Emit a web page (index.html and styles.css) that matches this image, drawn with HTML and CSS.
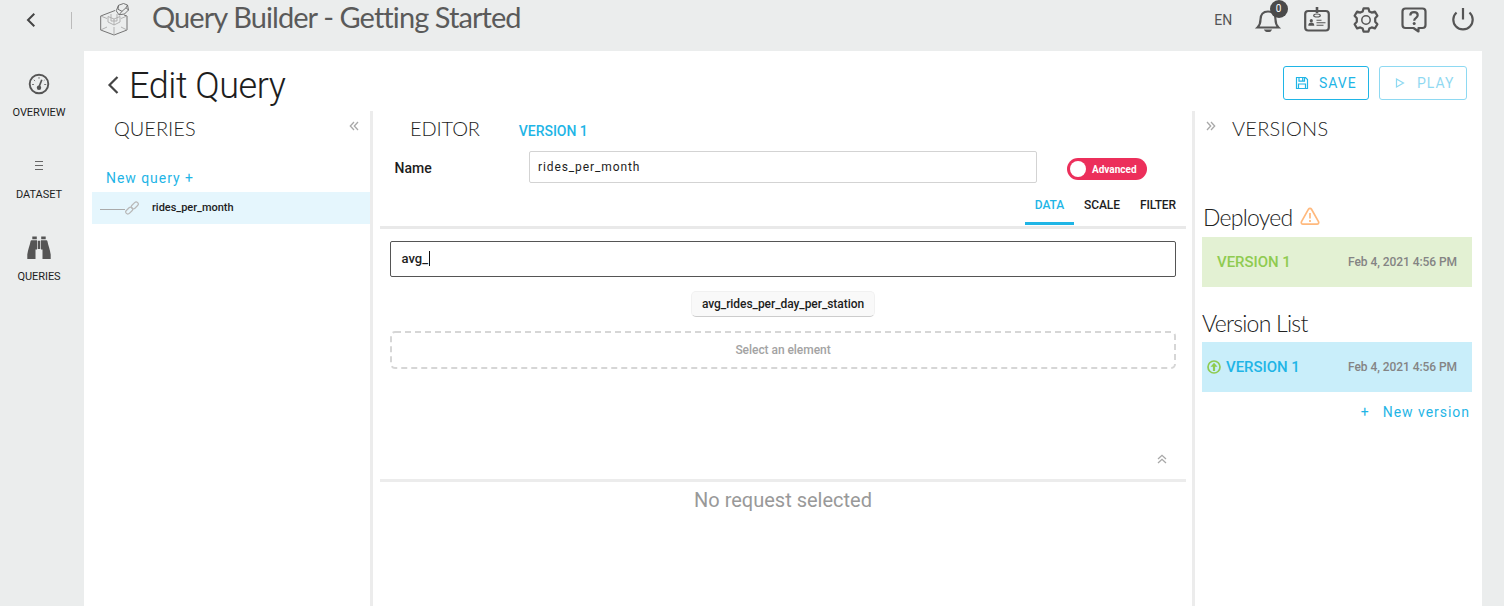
FILE: index.html
```html
<!DOCTYPE html>
<html lang="en">
<head>
<meta charset="utf-8">
<title>Query Builder - Getting Started</title>
<link rel="stylesheet" href="styles.css">
</head>
<body>
<header class="topbar">
  <svg class="top-back" width="12" height="16" viewBox="0 0 12 16"><path d="M9.300 1.800 3 8l6.300 6.200"/></svg>
  <span class="top-sep"></span>
  <svg class="logo" width="32" height="34" viewBox="0 0 32 34">
    <g fill="none" stroke="#666" stroke-width=".9" stroke-linejoin="round">
      <path d="M17 8.500 2.700 14v14L16 33l13-5V14l-3-1"/>
      <path stroke="#aaa" d="M2.700 14 9 16.500M29 14l-6 2.500M16 25v8M2.700 28 9 25M29 28l-6-3M10 14.500v5.500l6 3 6-3v-5.500M10 14.500l6 2.500 6-2.500M16 17v6M13 12v7h6v-7"/>
      <path d="m20.500 3.300 5-1.800 4 1.500 1 5-4 4-5.500.8-2.800-4zM20.500 3.300l-.5 4 4 2 4-3.500 1.500-2.800M24 9.300l-3 3.500M28 5.800l2.500 2.200"/>
    </g>
  </svg>
  <h1 class="app-title">Query Builder - Getting Started</h1>
  <nav class="tools">
    <span class="lang">EN</span>
    <span class="bell">
      <svg class="tool" width="28" height="28" viewBox="0 0 28 28"><path d="M3.500 21.500h21c-2-2-3-3.500-3-8 0-5-2.500-8-7.500-8s-7.500 3-7.500 8c0 4.500-1 6-3 8z"/><path class="solid" d="M9.800 23.500h8.400c-.8 1.700-2.200 2.600-4.200 2.600s-3.400-.9-4.200-2.600z"/></svg>
      <span class="badge">0</span>
    </span>
    <svg class="tool" width="28" height="28" viewBox="0 0 28 28"><rect x="2.200" y="5" width="23.600" height="19.500" rx="3"/><path d="M14 1v6" stroke-width="2.600"/><ellipse cx="14" cy="9.500" rx="3.300" ry="1.500" stroke-width="1.200"/><circle class="solid" cx="8.300" cy="14.700" r="1.600"/><path class="solid" d="M5.300 19.800c0-2.200 1.200-3.200 3-3.200s3 1 3 3.200z"/><path d="M13.500 14.300h5M13.500 16.800h9M13.500 19.300h7" stroke-width="1.100"/></svg>
    <svg class="tool" width="28" height="28" viewBox="0 0 28 28"><path stroke-linejoin="round" d="M11.600 2.300h4.800l.9 3.100 2.400 1.200 3.200-1 2.500 4.200-2.200 2.400v3.600l2.200 2.400-2.500 4.200-3.200-1-2.400 1.200-.9 3.100h-4.800l-.9-3.100-2.400-1.200-3.200 1-2.500-4.200 2.200-2.400v-3.600l-2.200-2.400 2.500-4.200 3.200 1 2.400-1.200z"/><circle cx="14" cy="14" r="4.200" stroke-width="1.500"/></svg>
    <svg class="tool" width="28" height="28" viewBox="0 0 28 28"><path stroke-linejoin="round" d="M5.500 2.500h17c2 0 3 1 3 3V19c0 2-1 3-3 3h-4v3.500L13.500 22h-8c-2 0-3-1-3-3V5.500c0-2 1-3 3-3z"/><path d="M10.300 9.500c0-2.200 1.500-3.300 3.700-3.300s3.700 1.200 3.700 3.100c0 2.500-3.500 2.500-3.500 5.400"/><circle class="solid" cx="14.200" cy="17.600" r="1.500"/></svg>
    <svg class="tool" width="28" height="28" viewBox="0 0 28 28"><path d="M14 2v11.500M7.500 6.500a9.700 9.700 0 1 0 13 0"/></svg>
  </nav>
</header>
<div class="shell">
  <aside class="sidebar">
    <a class="side-item">
      <svg width="24" height="24" viewBox="0 0 24 24"><circle cx="12" cy="12" r="9.300" fill="none" stroke="#555" stroke-width="1.900"/><path d="M14.800 7.800 12 15" stroke="#555" stroke-width="1.700"/><circle cx="12" cy="15.800" r="2.200" fill="#555"/><path d="M5 12.500h2M17.200 12.500h2M6.800 7.800l1.300 1.200M12 5v1.800M17.600 8l-.8.700" stroke="#777" stroke-width="1"/></svg>
      <span>OVERVIEW</span>
    </a>
    <a class="side-item">
      <svg width="24" height="24" viewBox="0 0 24 24"><path d="M8 7.500h8M8 11.500h8M8 15.500h8" stroke="#666" stroke-width="1"/></svg>
      <span>DATASET</span>
    </a>
    <a class="side-item">
      <svg width="24" height="24" viewBox="0 0 24 24" fill="#555"><path d="M5.300.5h4.500v2.800H5.300zM14.200.5h4.500v2.800h-4.500zM5 4.300h5v9.200H8.500V23H.3v-4.500C1 13 3 9 3.500 5.500 3.800 4.500 4.200 4.300 5 4.300zM19 4.300h-5v9.200h1.500V23h8.200v-4.500C23 13 21 9 20.500 5.500c-.3-1-.7-1.200-1.500-1.200zM10.700 4.800h2.600V13h-2.600z"/></svg>
      <span>QUERIES</span>
    </a>
  </aside>
  <main class="page">
    <div class="page-head">
      <svg class="head-back" width="14" height="20" viewBox="0 0 14 20"><path d="M11.500 2 3.500 10l8 8"/></svg>
      <h2 class="page-title">Edit Query</h2>
      <div class="actions">
        <button class="btn save"><svg width="14" height="14" viewBox="0 0 14 14"><path d="M1.500 1.500h9l2 2v9h-11zM4 1.500v3.700h5.500V1.500M7.700 2v2.500M3.500 12.500V8h7v4.500"/></svg>SAVE</button>
        <button class="btn play"><svg width="12" height="12" viewBox="0 0 12 12"><path d="M2.500 2v8l7-4z"/></svg>PLAY</button>
      </div>
    </div>
    <div class="columns">
      <section class="queries">
        <div class="col-head"><h3 class="col-title t-queries">QUERIES</h3><svg class="chev" width="10" height="10" viewBox="0 0 10 10"><path d="M5 1 1.300 5 5 9M9 1 5.300 5 9 9"/></svg></div>
        <a class="new-query">New query +</a>
        <div class="query-row">
          <span class="branch"></span>
          <svg width="14" height="14" viewBox="0 0 14 14" fill="none" stroke="#b8b8b8" stroke-width="1.200"><rect x="5.800" y="2.300" width="8" height="4.200" rx="2.100" transform="rotate(-45 9.800 4.400)"/><rect x=".2" y="7.500" width="8" height="4.200" rx="2.100" transform="rotate(-45 4.200 9.600)"/></svg>
          <span class="query-name">rides_per_month</span>
        </div>
      </section>
      <section class="editor">
        <div class="editor-head"><h3 class="col-title t-editor">EDITOR</h3><span class="editor-version">VERSION 1</span></div>
        <div class="name-row">
          <label class="name-label">Name</label>
          <div class="name-input">rides_per_month</div>
          <div class="toggle"><span class="knob"></span>Advanced</div>
        </div>
        <div class="tabs"><span class="tab active">DATA</span><span class="tab">SCALE</span><span class="tab">FILTER</span></div>
        <div class="search">avg_<span class="caret"></span></div>
        <div class="chip">avg_rides_per_day_per_station</div>
        <div class="drop"><svg class="dash" width="786" height="38"><rect x="1" y="1" width="784" height="36" rx="4"/></svg><span>Select an element</span></div>
        <div class="collapse"><svg class="chev" width="10" height="10" viewBox="0 0 10 10"><path d="M1 5 5 1.300 9 5M1 9l4-3.700L9 9"/></svg></div>
        <div class="empty">No request selected</div>
      </section>
      <section class="versions">
        <div class="col-head"><svg class="chev" width="10" height="10" viewBox="0 0 10 10"><path d="M1 1l3.700 4L1 9M5 1l3.700 4L5 9"/></svg><h3 class="col-title t-versions">VERSIONS</h3></div>
        <h4 class="group deployed"><span>Deployed</span><svg width="20" height="19" viewBox="0 0 20 19" fill="none" stroke="#ffb97d" stroke-width="1.700" stroke-linejoin="round"><path d="M8.500 2.200c.7-1.200 2.300-1.200 3 0l7 12.500c.6 1.300 0 2.500-1.500 2.500H3c-1.500 0-2.100-1.200-1.500-2.500z"/><path d="M10 6v5.500M10 13v2"/></svg></h4>
        <div class="ver green"><b>VERSION 1</b><time>Feb 4, 2021 4:56 PM</time></div>
        <h4 class="group list"><span>Version List</span></h4>
        <div class="ver blue"><svg width="14" height="14" viewBox="0 0 14 14" fill="none" stroke="#8fcb50"><circle cx="7" cy="7" r="6" stroke-width="1.700"/><path d="M7 11V5" stroke-width="2.200"/><path d="M7 2.700 3.500 6.700h7z" fill="#8fcb50" stroke="none"/></svg><b>VERSION 1</b><time>Feb 4, 2021 4:56 PM</time></div>
        <a class="new-version"><span>+</span>New version</a>
      </section>
    </div>
  </main>
</div>
</body>
</html>
```
FILE: styles.css
```css
* { box-sizing: border-box; }
body { margin: 0; height: 606px; overflow: hidden; background: #ebeded; color: #1d1d1d; font-family: Roboto, sans-serif; }
h1, h2, h3, h4 { margin: 0; font-weight: 300; white-space: nowrap; }
svg { flex: none; display: block; }

.topbar { height: 51px; display: flex; align-items: flex-start; padding-right: 27px; }
.top-back { margin: 12px 0 0 25px; fill: none; stroke: #444; stroke-width: 2; }
.top-sep { width: 1px; height: 17px; background: #bbb; margin: 12px 0 0 34px; }
.logo { margin: 2px 0 0 26px; }
.app-title { font: 400 29px/36px Lato, sans-serif; letter-spacing: -.92px; color: #5a5a5a; margin: -1px 0 0 22px; }
.tools { margin-left: auto; display: flex; align-items: center; gap: 20.750px; height: 39px; }
.tool { fill: none; stroke: #555; stroke-width: 2.200; }
.tool .solid { fill: #555; stroke: none; }
.lang { font-size: 14px; color: #555; margin-right: 1px; }
.bell { position: relative; }
.badge { position: absolute; left: 15.500px; top: -6px; width: 18px; height: 18px; border-radius: 50%; background: #4a4a4a; color: #fff; font-size: 10px; line-height: 18px; text-align: center; }

.shell { display: flex; height: 555px; }
.sidebar { width: 84px; padding-top: 21px; }
.side-item { height: 82px; width: 78px; display: flex; flex-direction: column; align-items: center; font-size: 11px; line-height: 14px; gap: 10px; letter-spacing: -.05px; }
.page { width: 1398px; background: #fff; display: flex; flex-direction: column; }
.page-head { height: 60px; display: flex; padding: 0 15px 0 22px; }
.head-back { margin-top: 24px; fill: none; stroke: #444; stroke-width: 2.200; }
.page-title { font-size: 36px; line-height: 42px; letter-spacing: -.45px; margin: 14px 0 0 9px; }
.actions { margin-left: auto; display: flex; gap: 10px; padding-top: 15px; }
.btn { height: 34px; border: 1px solid #1fb5e6; border-radius: 3px; background: #fff; color: #1fb5e6; font: 400 14px Roboto, sans-serif; letter-spacing: 1px; display: flex; align-items: center; padding: 0 0 0 11px; gap: 10px; }
.btn svg { fill: none; stroke: #1fb5e6; stroke-width: 1.200; }
.save { width: 86px; }
.play { width: 88px; padding-left: 14px; gap: 11px; opacity: .5; }

.columns { flex: 1; display: grid; grid-template-columns: 289px 822px 287px; }
.queries { border-right: 3px solid #ececec; padding-left: 8px; }
.col-head { height: 36px; display: flex; }
.col-title { font: 300 20px/34px Lato, sans-serif; }
.chev { fill: none; stroke: #a8a8a8; stroke-width: 1.300; }
.queries .chev { margin: 10px 11px 0 auto; }
.t-queries { margin-left: 22px; }
.new-query { display: block; margin: 20px 0 0 14px; font-size: 14px; line-height: 22px; letter-spacing: .95px; color: #1fb5e6; }
.query-row { height: 32px; margin-top: 3px; background: #e5f6fd; display: flex; align-items: center; padding: 0 0 1px 8px; font-size: 11px; font-weight: 500; }
.branch { width: 25px; height: 1px; background: #aaa; margin-top: 3px; }
.query-name { margin-left: 13px; letter-spacing: -.03px; }

.editor { border-right: 3px solid #ececec; padding: 0 6px 0 7px; }
.editor-head { height: 36px; display: flex; padding-left: 30px; }
.t-editor { letter-spacing: -.15px; }
.editor-version { margin-left: 39px; font-size: 14px; font-weight: 500; line-height: 41px; letter-spacing: -.05px; color: #1fb5e6; }
.name-row { display: flex; padding: 4px 0 0 14.500px; height: 46px; }
.name-label { width: 134.500px; font-size: 14px; font-weight: 500; line-height: 34px; }
.name-input { width: 508px; height: 32px; border: 1px solid #d3d3d3; border-radius: 2px; padding-left: 8px; font-size: 12px; line-height: 30px; letter-spacing: .9px; }
.toggle { width: 80px; height: 22px; margin: 7px 0 0 30px; border-radius: 11px; background: #ec2f5b; color: #fff; font-size: 10px; font-weight: 700; display: flex; align-items: center; padding-left: 3px; gap: 6px; }
.knob { width: 16px; height: 16px; border-radius: 50%; background: #fff; }
.tabs { height: 36px; border-bottom: 3px solid #e9e9e9; display: flex; justify-content: flex-end; font-size: 12px; font-weight: 500; letter-spacing: -.1px; }
.tab { padding: 0 10px; line-height: 24px; height: 32px; }
.active { color: #1fb5e6; border-bottom: 3px solid #1fb5e6; }
.search { height: 36px; margin: 12px 10px 0; border: 1px solid #555; border-radius: 2px; padding: 0 0 2px 10.500px; display: flex; align-items: center; font-size: 13px; font-weight: 500; }
.caret { width: 1px; height: 15px; margin-left: 1px; background: #111; }
.chip { width: 184px; height: 26px; margin: 14px auto 0; border: 1px solid #f1f1f1; border-bottom-color: #ccc; border-radius: 5px; background: #f9f9f9; text-align: center; font-size: 12px; font-weight: 500; line-height: 24px; letter-spacing: -.05px; }
.drop { position: relative; height: 38px; margin: 14px 10px 0; text-align: center; font-size: 12px; line-height: 38px; color: #a3a3a3; font-weight: 500; letter-spacing: -.05px; }
.dash { position: absolute; left: 0; top: 0; fill: none; stroke: #d6d6d6; stroke-width: 2; stroke-dasharray: 6 4; }
.collapse { height: 113px; border-bottom: 3px solid #ececec; display: flex; justify-content: flex-end; align-items: flex-end; padding: 0 19.500px 15px 0; }
.empty { text-align: center; font-size: 20px; line-height: 24px; margin-top: 6px; color: #999; }

.versions { padding: 0 10px 0 7px; }
.versions .chev { margin: 10px 0 0 4px; }
.t-versions { margin-left: 16px; letter-spacing: .25px; }
.group { font: 300 23px/30px Lato, sans-serif; letter-spacing: -.75px; display: flex; align-items: center; gap: 7px; color: #222; }
.deployed { margin-top: 54px; height: 36px; padding: 0 0 5px 1px; }
.list { margin-top: 20px; height: 36px; padding: 0 0 4px; }
.ver { height: 50px; display: flex; align-items: center; padding-right: 15px; }
.ver b { font-size: 15px; font-weight: 500; letter-spacing: -.05px; }
.ver time { margin-left: auto; font-size: 12px; font-weight: 500; letter-spacing: -.06px; color: #848484; }
.green { background: #e3f1d3; padding-left: 15px; color: #8fcb50; }
.blue { background: #c9eefa; padding-left: 5px; gap: 5px; color: #1fb5e6; margin-top: -1px; }
.new-version { display: flex; justify-content: flex-end; gap: 13px; margin-top: 9px; padding-right: 2px; font-size: 14px; line-height: 22px; letter-spacing: .97px; color: #1fb5e6; }
```
